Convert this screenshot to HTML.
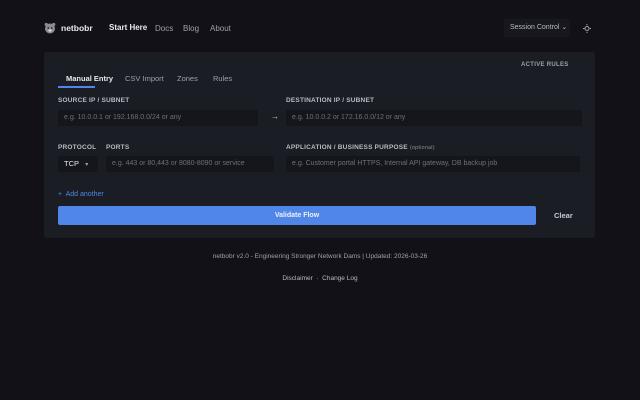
<!DOCTYPE html>
<html><head><style>
*{margin:0;padding:0;box-sizing:border-box}
body{width:640px;height:400px;background:#121117;font-family:"Liberation Sans",sans-serif;color:#c9cbd3;position:relative;overflow:hidden;font-size:7px}
.a{position:absolute;white-space:nowrap}
.card{position:absolute;left:44px;top:52px;width:551px;height:186px;background:#1b1d24;border-radius:3px}
.inp{position:absolute;background:#15161b;border-radius:2px;color:#6d7078;font-size:7px;padding-left:6px;line-height:16px;height:16px;overflow:hidden}
.lbl{position:absolute;font-size:6.5px;font-weight:bold;color:#b8bbc4;letter-spacing:.2px}
</style></head><body>
<svg class="a" style="left:44px;top:22px" width="12" height="12" viewBox="0 0 12 12"><circle cx="6" cy="6.5" r="5" fill="#8a8d94"/><circle cx="2.3" cy="2.5" r="1.6" fill="#8a8d94"/><circle cx="9.7" cy="2.5" r="1.6" fill="#8a8d94"/><circle cx="4.3" cy="6" r=".9" fill="#222"/><circle cx="7.7" cy="6" r=".9" fill="#222"/><ellipse cx="6" cy="8.5" rx="1.6" ry="1.1" fill="#ddd"/></svg>
<div class="a" style="left:61px;top:23px;font-size:8.5px;font-weight:bold;color:#e8e9ee">netbobr</div>
<div class="a" style="left:109px;top:23px;font-size:8px;font-weight:bold;color:#e8e9ee">Start Here</div>
<div class="a" style="left:155px;top:24px;font-size:8px;color:#9ea1aa">Docs</div>
<div class="a" style="left:183px;top:24px;font-size:8px;color:#9ea1aa">Blog</div>
<div class="a" style="left:210px;top:24px;font-size:8px;color:#9ea1aa">About</div>
<div class="a" style="left:504px;top:19px;width:66px;height:18px;background:#17181e;border-radius:2px;font-size:7px;color:#b8bbc4;line-height:18px;padding-left:6px">Session Control ⌄</div>
<svg class="a" style="left:583px;top:24px" width="8" height="9" viewBox="0 0 8 9"><circle cx="4" cy="4.5" r="2" fill="none" stroke="#9ea1aa" stroke-width="1"/><path d="M4 0v1.3M4 7.7V9M0 4.5h1.3M6.7 4.5H8" stroke="#9ea1aa" stroke-width="1"/></svg>
<div class="card"></div>
<div class="a" style="left:521px;top:62px;font-size:6px;font-weight:bold;color:#9ea1aa;letter-spacing:.3px">ACTIVE RULES</div>
<div class="a" style="left:66px;top:74px;font-size:7.5px;color:#e8e9ee;font-weight:bold">Manual Entry</div>
<div class="a" style="left:58px;top:86px;width:37px;height:2px;background:#4f86e8"></div>
<div class="a" style="left:125px;top:74px;font-size:7.5px;color:#9ea1aa">CSV Import</div>
<div class="a" style="left:177px;top:74px;font-size:7.5px;color:#9ea1aa">Zones</div>
<div class="a" style="left:213px;top:74px;font-size:7.5px;color:#9ea1aa">Rules</div>
<div class="lbl" style="left:58px;top:97px">SOURCE IP / SUBNET</div>
<div class="lbl" style="left:286px;top:97px">DESTINATION IP / SUBNET</div>
<div class="inp" style="left:58px;top:110px;width:200px">e.g. 10.0.0.1 or 192.168.0.0/24 or any</div>
<div class="a" style="left:271px;top:112px;font-size:8px;color:#c9cbd3">→</div>
<div class="inp" style="left:286px;top:110px;width:296px">e.g. 10.0.0.2 or 172.16.0.0/12 or any</div>
<div class="lbl" style="left:58px;top:144px">PROTOCOL</div>
<div class="lbl" style="left:106px;top:144px">PORTS</div>
<div class="lbl" style="left:286px;top:144px">APPLICATION / BUSINESS PURPOSE <span style="font-weight:normal;font-size:5.5px;color:#8a8d94">(optional)</span></div>
<div class="inp" style="left:58px;top:156px;width:40px;color:#e8e9ee;font-size:7.5px">TCP&nbsp;&nbsp;&nbsp;<span style="font-size:6px;color:#9ea1aa">▾</span></div>
<div class="inp" style="left:106px;top:156px;width:168px">e.g. 443 or 80,443 or 8080-8090 or service</div>
<div class="inp" style="left:286px;top:156px;width:294px">e.g. Customer portal HTTPS, Internal API gateway, DB backup job</div>
<div class="a" style="left:58px;top:191px;font-size:7px;color:#4f86e8">+&nbsp; Add another</div>
<div class="a" style="left:58px;top:206px;width:478px;height:19px;background:#4f86e8;border-radius:2px;text-align:center;line-height:19px;font-size:7px;font-weight:bold;color:#eef2fb">Validate Flow</div>
<div class="a" style="left:554px;top:211px;font-size:7.5px;font-weight:bold;color:#c9cbd3">Clear</div>
<div class="a" style="left:0;width:640px;text-align:center;top:253px;font-size:6.5px;color:#9ea1aa">netbobr v2.0 - Engineering Stronger Network Dams | Updated: 2026-03-26</div>
<div class="a" style="left:0;width:640px;text-align:center;top:275px;font-size:6.5px;color:#b8bbc4">Disclaimer &nbsp;·&nbsp; Change Log</div>
</body></html>
